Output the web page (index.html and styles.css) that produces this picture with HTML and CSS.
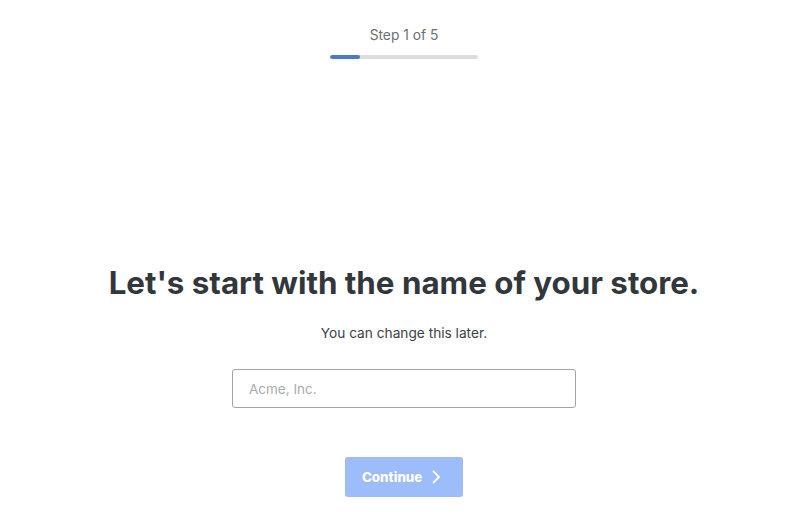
FILE: index.html
```html
<!DOCTYPE html>
<html>
<head>
<meta charset="utf-8">
<link rel="stylesheet" href="styles.css">
</head>
<body>
<div class="page">
  <header class="progress">
    <div class="step">Step 1 of 5</div>
    <div class="bar"><div class="fill" style="width:20%"></div></div>
  </header>
  <main class="form">
    <h1 class="title">Let's start with the name of your store.</h1>
    <p class="sub">You can change this later.</p>
    <input class="field" type="text" placeholder="Acme, Inc.">
    <button class="btn">Continue
      <svg class="chev" width="10" height="14" viewBox="0 0 10 14"><path d="M2.5 1.5 L8 7 L2.5 12.5" fill="none" stroke="#fff" stroke-width="1.8" stroke-linecap="round" stroke-linejoin="round"/></svg>
    </button>
  </main>
</div>
</body>
</html>
```
FILE: styles.css
```css
html, body {
  margin: 0;
  padding: 0;
  background: #fff;
}
body {
  font-family: "Inter", "Liberation Sans", sans-serif;
  color: #33383d;
}
.page {
  width: 800px;
  height: 527px;
  padding-left: 8px;
  box-sizing: border-box;
  display: flex;
  flex-direction: column;
  align-items: center;
}
.progress {
  display: flex;
  flex-direction: column;
  align-items: center;
  padding-top: 27px;
}
.step {
  font-size: 13.8px;
  line-height: 16px;
  color: #6b6f73;
}
.bar {
  margin-top: 12px;
  width: 148px;
  height: 4px;
  border-radius: 2px;
  background: #dcdcdc;
  overflow: hidden;
}
.fill {
  height: 100%;
  background: #4a7ac8;
  border-radius: 2px;
}
.form {
  display: flex;
  flex-direction: column;
  align-items: center;
  margin-top: 205px;
}
.title {
  margin: 0;
  font-size: 31.3px;
  line-height: 38px;
  font-weight: 700;
  color: #32373c;
  letter-spacing: 0;
}
.sub {
  margin: 22px 0 0;
  font-size: 13.7px;
  line-height: 18px;
  color: #3d4145;
}
.field {
  margin-top: 27px;
  width: 344px;
  height: 39px;
  box-sizing: border-box;
  border: 1px solid #a2a5a8;
  border-radius: 3px;
  padding: 0 16px;
  font-family: inherit;
  font-size: 13.5px;
  color: #333;
  outline: none;
}
.field::placeholder {
  color: #a9acaf;
}
.btn {
  margin-top: 49px;
  width: 118px;
  height: 40px;
  border: none;
  border-radius: 3px;
  background: #9dbcfa;
  color: #fff;
  font-family: inherit;
  font-size: 13.3px;
  font-weight: 800;
  display: flex;
  align-items: center;
  justify-content: flex-start;
  gap: 9px;
  padding: 0 0 0 17px;
}
.chev {
  display: block;
}
```
